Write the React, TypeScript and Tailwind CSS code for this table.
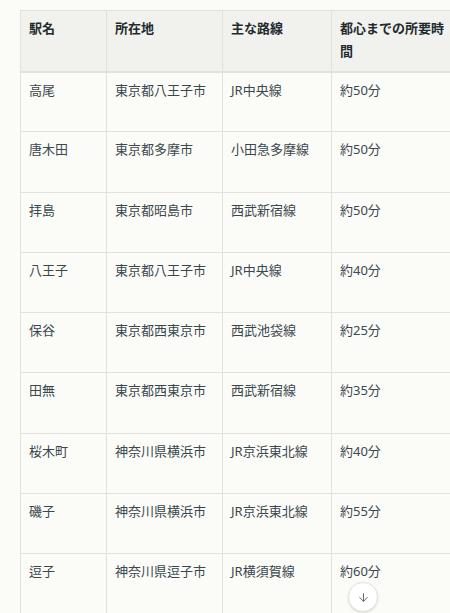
import { ArrowDown } from "lucide-react";

const rows = [
  ["高尾", "東京都八王子市", "JR中央線", "約50分"],
  ["唐木田", "東京都多摩市", "小田急多摩線", "約50分"],
  ["拝島", "東京都昭島市", "西武新宿線", "約50分"],
  ["八王子", "東京都八王子市", "JR中央線", "約40分"],
  ["保谷", "東京都西東京市", "西武池袋線", "約25分"],
  ["田無", "東京都西東京市", "西武新宿線", "約35分"],
  ["桜木町", "神奈川県横浜市", "JR京浜東北線", "約40分"],
  ["磯子", "神奈川県横浜市", "JR京浜東北線", "約55分"],
  ["逗子", "神奈川県逗子市", "JR横須賀線", "約60分"],
];

const headers = ["駅名", "所在地", "主な路線", "都心までの所要時間"];
const widths = ["w-[86px]", "w-[116px]", "w-[109px]", "w-[130px]"];

export default function App() {
  return (
    <div
      className="relative h-[613px] overflow-hidden bg-[#fbfbf8] pt-[10px] pl-[20px]"
      style={{ fontFamily: '"Noto Sans", "Noto Sans CJK JP", sans-serif' }}
    >
      <div className="overflow-hidden">
        <table className="w-[441px] table-fixed border-collapse text-[13px] leading-[23px] text-[#3a484d]">
          <thead>
            <tr className="bg-[#f1f1ed]">
              {headers.map((h, i) => (
                <th
                  key={h}
                  className={`${widths[i]} h-[61px] border border-b-2 border-[#e1e1dd] px-2 pt-[6px] text-left align-top font-bold text-[#1e2b2f]`}
                >
                  {h}
                </th>
              ))}
            </tr>
          </thead>
          <tbody>
            {rows.map((r) => (
              <tr key={r[0]}>
                {r.map((c, i) => (
                  <td
                    key={i}
                    className="h-[60.25px] border border-[#e1e1dd] px-2 pt-[6px] align-top"
                  >
                    {c}
                  </td>
                ))}
              </tr>
            ))}
          </tbody>
        </table>
      </div>
      <button className="absolute left-[348px] top-[582px] flex h-[30px] w-[30px] items-center justify-center rounded-full border border-[#e3e3df] bg-white text-[#55606a] shadow-sm">
        <ArrowDown size={13} strokeWidth={1.75} />
      </button>
    </div>
  );
}
